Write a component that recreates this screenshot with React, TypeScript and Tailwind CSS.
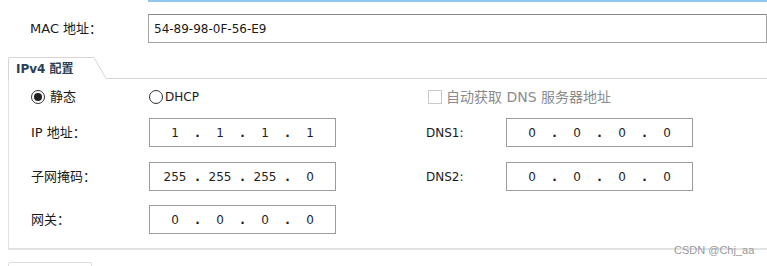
import React from "react";

const font = { fontFamily: '"DejaVu Sans", "Noto Sans CJK SC", sans-serif' };

function IpBox({ parts }: { parts: string[] }) {
  return (
    <div className="flex h-[29px] w-[187px] items-center border border-[#9c9c9c] bg-white pl-[6px] text-[12px] text-[#1e1e1e]">
      {parts.map((p, i) => (
        <React.Fragment key={i}>
          <span className="w-[38px] text-center">{p}</span>
          {i < parts.length - 1 && <span className="w-[7px] text-center font-bold">.</span>}
        </React.Fragment>
      ))}
    </div>
  );
}

function Row({
  label,
  parts,
  right,
  className,
}: {
  label: string;
  parts: string[];
  right?: { label: string; parts: string[] };
  className?: string;
}) {
  return (
    <div className={"flex items-center " + (className ?? "")}>
      <span className="w-[118px] text-[13px] text-[#1a1a1a]">{label}</span>
      <IpBox parts={parts} />
      {right && (
        <>
          <span className="ml-[90px] w-[80px] text-[12px] text-[#1a1a1a]">{right.label}</span>
          <IpBox parts={right.parts} />
        </>
      )}
    </div>
  );
}

export default function App() {
  return (
    <div className="relative h-[266px] w-[767px] overflow-hidden bg-white" style={font}>
      <div className="ml-[148px] h-[2px] bg-[#8ec6f0]" />

      {/* MAC */}
      <div className="mt-[12px] flex items-center">
        <span className="w-[148px] pl-[30px] text-[13px] text-[#1a1a1a]">MAC 地址：</span>
        <div className="flex h-[29px] flex-1 items-center border border-[#a4a4a4] border-t-[#8a8a8a] pl-[5px] text-[12px] text-[#1a1a1a]">
          54-89-98-0F-56-E9
        </div>
      </div>

      {/* tab header */}
      <div className="mt-[14px] flex h-[22px] items-stretch pl-[8px]">
        <div className="flex w-[86px] items-center rounded-tl-[2px] border-l border-t border-[#d6d6d6] pl-[7px] text-[12px] font-bold text-[#2b3f55]">
          IPv4 配置
        </div>
        <svg width="12" height="22" className="block">
          <line x1="0" y1="0.5" x2="12" y2="21.5" stroke="#d6d6d6" strokeWidth="1" />
        </svg>
        <div className="flex-1 border-b border-[#d6d6d6]" />
      </div>

      {/* group body */}
      <div className="ml-[8px] h-[171px] border-b-2 border-l border-[#e2e2e2] pl-[22px] pt-[8px]">
        <div className="flex h-[20px] items-center text-[13px]">
          <div className="flex w-[118px] items-center gap-[5px]">
            <span className="flex h-[14px] w-[14px] items-center justify-center rounded-full border border-[#333]">
              <span className="h-[8px] w-[8px] rounded-full bg-[#222]" />
            </span>
            <span className="text-[#1a1a1a]">静态</span>
          </div>
          <div className="flex w-[277px] items-center gap-[2px]">
            <span className="h-[14px] w-[14px] rounded-full border border-[#333]" />
            <span className="text-[12px] text-[#1a1a1a]">DHCP</span>
          </div>
          <div className="flex items-center gap-[4px] pl-[2px]">
            <span className="h-[14px] w-[14px] border border-[#c9c9c9]" />
            <span className="text-[14px] text-[#8c8c8c]">自动获取 DNS 服务器地址</span>
          </div>
        </div>

        <Row className="mt-[11px]" label="IP 地址：" parts={["1", "1", "1", "1"]} right={{ label: "DNS1:", parts: ["0", "0", "0", "0"] }} />
        <Row className="mt-[15px]" label="子网掩码：" parts={["255", "255", "255", "0"]} right={{ label: "DNS2:", parts: ["0", "0", "0", "0"] }} />
        <Row className="mt-[14px]" label="网关：" parts={["0", "0", "0", "0"]} />
      </div>

      {/* next tab */}
      <div className="ml-[8px] mt-[12px] h-[10px] w-[84px] rounded-t-[2px] border-l border-r border-t border-[#dedede]" />

      <span className="absolute left-[674px] top-[242px] text-[11px] text-[#9a9a9a]" style={{ fontFamily: '"Liberation Sans", sans-serif' }}>
        CSDN @Chj_aa
      </span>
    </div>
  );
}
